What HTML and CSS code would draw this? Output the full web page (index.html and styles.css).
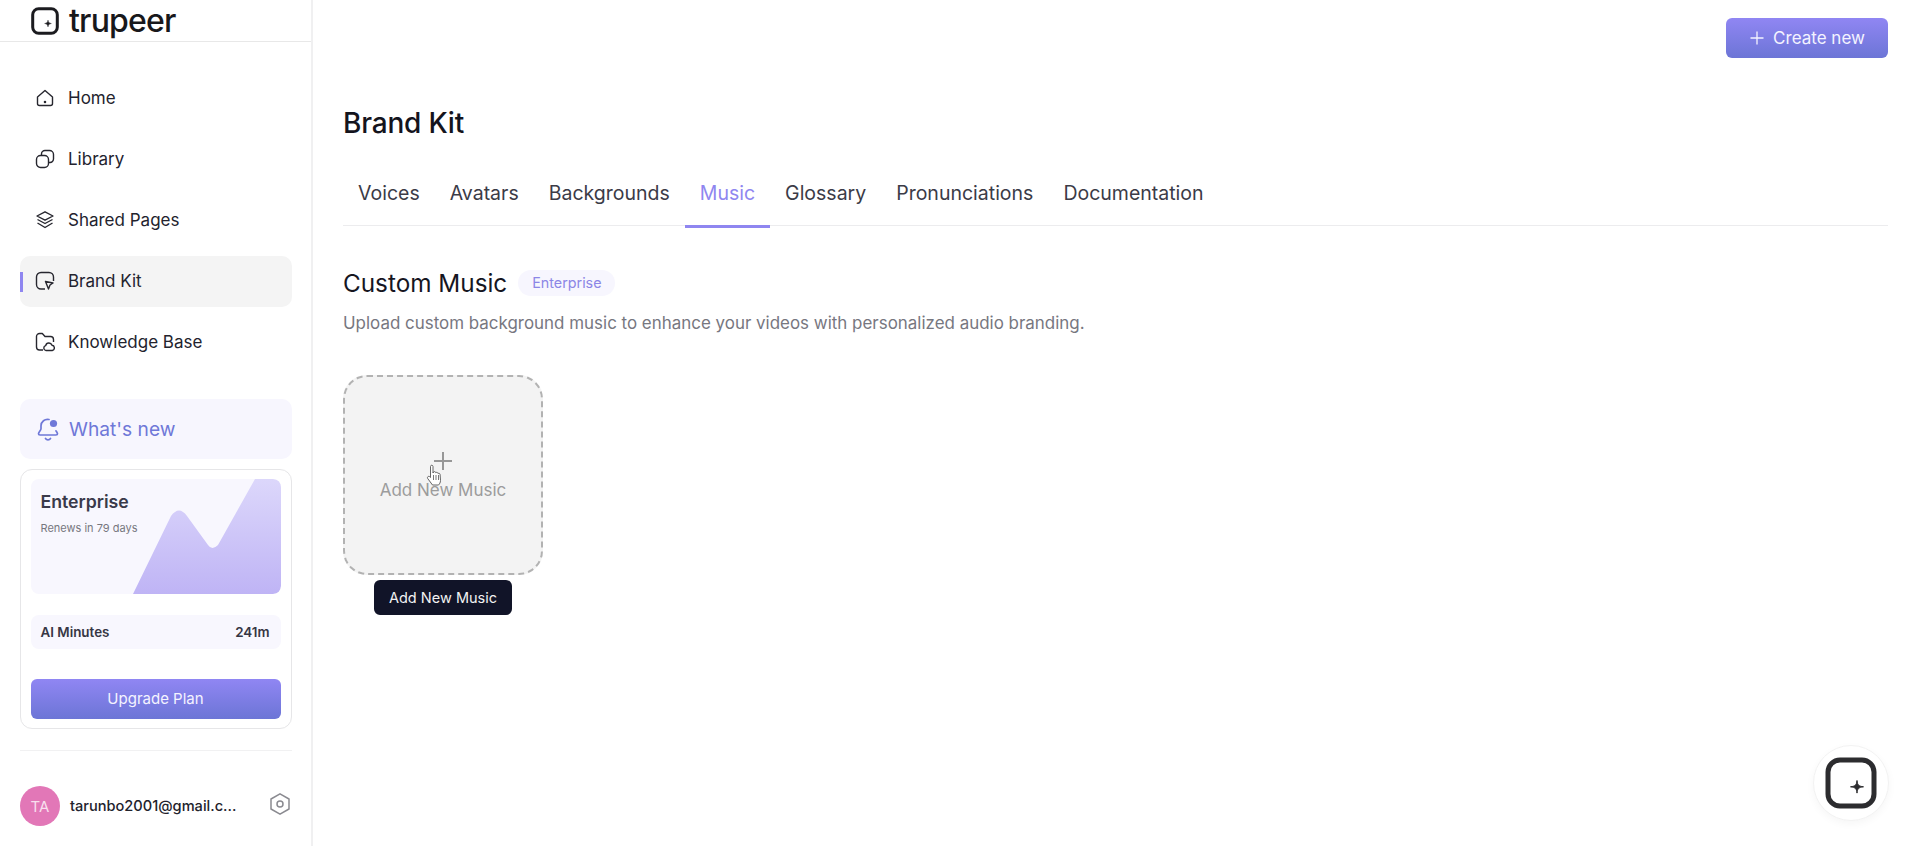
FILE: index.html
```html
<!DOCTYPE html>
<html lang="en">
<head>
<meta charset="utf-8">
<title>Brand Kit</title>
<link rel="stylesheet" href="styles.css">
</head>
<body>
<div class="app">
  <aside class="sidebar">
    <div class="logo">
      <svg class="logo-mark" viewBox="0 0 28 28" fill="none"><rect x="1.700" y="1.700" width="24.600" height="24.600" rx="6" stroke="#1b1b1f" stroke-width="3"/><path d="M17 13.200c.3 2.200 1.100 3 3.300 3.300-2.200.3-3 1.100-3.300 3.300-.3-2.200-1.100-3-3.300-3.300 2.200-.3 3-1.100 3.300-3.300z" fill="#1b1b1f" stroke="#1b1b1f" stroke-width=".5"/></svg>
      <span class="logo-text">trupeer</span>
    </div>
    <nav class="nav">
      <a class="nav-item"><svg class="nav-icon" viewBox="0 0 20 20" fill="none" stroke="#27272f" stroke-width="1.400"><path d="M2.500 9 10 2.500 17.500 9v6.500a2 2 0 0 1-2 2h-11a2 2 0 0 1-2-2z" stroke-linejoin="round"/><circle cx="10" cy="14" r=".6" fill="#27272f"/></svg><span>Home</span></a>
      <a class="nav-item"><svg class="nav-icon" viewBox="0 0 20 20" fill="none" stroke="#27272f" stroke-width="1.400"><rect x="1.500" y="6.500" width="12" height="12" rx="4"/><path d="M6.500 6.500V5a3.500 3.500 0 0 1 3.500-3.500h4.500A4 4 0 0 1 18.500 5.500V10a3.500 3.500 0 0 1-3.500 3.500h-1.500"/></svg><span>Library</span></a>
      <a class="nav-item"><svg class="nav-icon" viewBox="0 0 20 20" fill="none" stroke="#27272f" stroke-width="1.400" stroke-linejoin="round"><path d="M10 1.800 18 6l-8 4.200L2 6z"/><path d="M2.500 9.500 10 13.500l7.500-4"/><path d="M2.500 13 10 17.500l7.500-4.500"/></svg><span>Shared Pages</span></a>
      <a class="nav-item active"><svg class="nav-icon" viewBox="0 0 20 20" fill="none" stroke="#27272f" stroke-width="1.400" stroke-linejoin="round"><path d="M10 18H6a4.500 4.500 0 0 1-4.500-4.500V6A4.500 4.500 0 0 1 6 1.500h8A4.500 4.500 0 0 1 18.500 6v4"/><path d="M10.500 10.500 18 12l-3 2-1.500 4z"/></svg><span>Brand Kit</span></a>
      <a class="nav-item"><svg class="nav-icon" viewBox="0 0 20 20" fill="none" stroke="#27272f" stroke-width="1.400" stroke-linejoin="round"><path d="M8 18H4.500a3 3 0 0 1-3-3V4.500a3 3 0 0 1 3-3h2.800L10 4.500h5.500a3 3 0 0 1 3 3V10"/><path d="M11 18.500a2.500 2.500 0 0 1-.3-4.900 3.300 3.300 0 0 1 6.300-.4 2.700 2.700 0 0 1 .3 5.300z"/></svg><span>Knowledge Base</span></a>
    </nav>
    <a class="whats-new">
      <svg class="bell" viewBox="0 0 24 24" fill="none" stroke="#6f78d8" stroke-width="1.700" stroke-linecap="round"><path d="M13 2.500a6.500 6.500 0 0 0-8 6.300v3c0 1.500-2.500 3.500-2.500 5 0 .8.700 1.200 1.500 1.200h16c.8 0 1.500-.4 1.500-1.200 0-1-1-2-1.500-3"/><path d="M9.500 21.500a3 3 0 0 0 5 0"/><circle cx="17.500" cy="6.500" r="3.600" fill="#6f78d8" stroke="none"/></svg>
      <span>What's new</span>
    </a>
    <section class="plan-card">
      <div class="plan-top">
        <svg class="plan-chart" viewBox="0 0 250 115" preserveAspectRatio="none"><defs><linearGradient id="cg" x1="0" y1="0" x2="0" y2="1"><stop offset="0" stop-color="#dcd7fb"/><stop offset="1" stop-color="#bfb4f5"/></linearGradient></defs><path d="M102 115 L140 37 Q148 26 156 37 L177 66 Q181 72 187 66 L224 0 H242 Q250 0 250 8 V107 Q250 115 242 115 Z" fill="url(#cg)"/></svg>
        <h3 class="plan-name">Enterprise</h3>
        <p class="plan-renew">Renews in 79 days</p>
      </div>
      <div class="plan-row"><span>AI Minutes</span><span>241m</span></div>
      <button class="btn plan-btn">Upgrade Plan</button>
    </section>
    <div class="account">
      <span class="avatar">TA</span>
      <span class="email">tarunbo2001@gmail.c...</span>
      <svg class="gear" viewBox="0 0 24 24" fill="none" stroke="#8a8a90" stroke-width="1.500" stroke-linejoin="round"><path d="M12 1.800 21 7v10l-9 5.200L3 17V7z"/><circle cx="12" cy="12" r="3"/></svg>
    </div>
  </aside>
  <main class="main">
    <div class="topbar">
      <button class="btn create-btn"><svg class="plus" viewBox="0 0 16 16" fill="none" stroke="currentColor" stroke-width="1.300"><path d="M8 1.500v13M1.500 8h13"/></svg>Create new</button>
    </div>
    <h1 class="title">Brand Kit</h1>
    <div class="tabs">
      <a class="tab">Voices</a><a class="tab">Avatars</a><a class="tab">Backgrounds</a><a class="tab current">Music</a><a class="tab">Glossary</a><a class="tab">Pronunciations</a><a class="tab">Documentation</a>
    </div>
    <div class="section-head">
      <h2 class="section-title">Custom Music</h2>
      <span class="badge">Enterprise</span>
    </div>
    <p class="section-desc">Upload custom background music to enhance your videos with personalized audio branding.</p>
    <div class="drop-wrap">
      <div class="drop">
        <svg class="drop-plus" viewBox="0 0 18 18" fill="none" stroke="#979797" stroke-width="2"><path d="M9 0v18M0 9h18"/></svg>
        <span class="drop-label">Add New Music</span>
        <svg class="hand" viewBox="0 0 18 24"><path d="M4.500 2.500c0-1.700 2.500-1.700 2.500 0v6.500l.5-1c1-.8 2.200-.3 2.300.7.900-.7 2.100-.3 2.200.8.900-.5 2-.1 2.100 1l.4 6c0 2-1 3.500-2 4.500H6.500L1.700 14.500c-.9-1.300.7-2.900 2-1.800l.8.800z" fill="#fff" stroke="#555" stroke-width=".9" stroke-linejoin="round"/><path d="M7.500 11v5M10 11v5M12.500 11v5" stroke="#555" stroke-width=".8"/></svg>
      </div>
      <div class="tooltip">Add New Music</div>
    </div>
  </main>
</div>
<div class="fab"><svg viewBox="0 0 52 52" fill="none"><rect x="3" y="3" width="46" height="46" rx="12" stroke="#2c2c2f" stroke-width="5"/><path d="M32 23.500c.4 4.500 1.700 5.700 6.500 6.300-4.800.6-6.100 1.800-6.500 6.300-.4-4.500-1.700-5.700-6.500-6.300 4.800-.6 6.100-1.800 6.500-6.300z" fill="#2c2c2f" stroke="#2c2c2f"/></svg></div>
</body>
</html>
```
FILE: styles.css
```css
* { box-sizing: border-box; }
html, body { margin: 0; height: 100%; }
body { font-family: Inter, "Liberation Sans", sans-serif; background: #fff; color: #1b1b25; overflow: hidden; }
h1, h2, h3, p { margin: 0; }
button { font-family: inherit; border: 0; }

.app { display: flex; height: 846px; }

.sidebar { width: 313px; flex: none; border-right: 2px solid #f0f0f1; display: flex; flex-direction: column; padding: 0 19px 0 20px; }
.logo { height: 42px; margin: 0 -19px 0 -20px; padding: 1px 0 0 31px; border-bottom: 1px solid #e8e8e8; display: flex; align-items: center; gap: 10px; flex: none; }
.logo-mark { width: 28px; height: 28px; flex: none; margin-top: -1px; }
.logo-text { font-size: 32px; font-weight: 500; letter-spacing: -.8px; color: #18181b; line-height: 36px; }

.nav { display: flex; flex-direction: column; gap: 10px; margin-top: 31px; }
.nav-item { display: flex; align-items: center; gap: 13px; height: 51px; padding: 0 0 1px 15px; border-radius: 10px; font-size: 17px; color: #23232e; position: relative; }
.nav-icon { width: 20px; height: 20px; flex: none; }
.nav-item.active { background: #f4f4f4; }
.nav-item.active::before { content: ""; position: absolute; left: 0; top: 16px; width: 3px; height: 20px; background: #8f86f0; }

.whats-new { height: 60px; margin-top: 31px; border-radius: 10px; background: #f7f6fe; display: flex; align-items: center; gap: 9px; padding-left: 16px; font-size: 19.200px; color: #6f78d8; flex: none; }
.bell { width: 24px; height: 24px; flex: none; }

.plan-card { margin-top: 10px; height: 260px; border: 1.500px solid #e6e6e8; border-radius: 12px; padding: 8.500px 10.500px 9px 9.500px; display: flex; flex-direction: column; flex: none; }
.plan-top { height: 115px; background: #f8f7fe; border-radius: 8px; padding: 11.500px 10px; position: relative; overflow: hidden; flex: none; }
.plan-chart { position: absolute; inset: 0; width: 100%; height: 100%; }
.plan-name { position: relative; font-size: 17.700px; line-height: 24px; font-weight: 600; color: #3a3a4a; }
.plan-renew { position: relative; font-size: 11px; line-height: 14px; margin-top: 7px; color: #77777f; }
.plan-row { margin-top: 21px; height: 34px; border-radius: 8px; background: #f8f7fe; display: flex; justify-content: space-between; align-items: center; padding: 0 11px 0 10px; font-size: 13.400px; font-weight: 600; color: #363644; flex: none; }
.btn { background: linear-gradient(#9086f3, #6c75d6); color: #f4f3ff; border-radius: 6px; }
.plan-btn { margin-top: 30px; height: 40px; font-size: 15px; flex: none; }

.account { margin-top: 21px; padding-top: 35px; border-top: 1px solid #f1f1f2; display: flex; align-items: center; flex: none; }
.avatar { width: 40px; height: 40px; border-radius: 50%; background: #e277b7; color: #f8dfee; font-size: 15px; display: flex; align-items: center; justify-content: center; flex: none; }
.email { margin-left: 10px; width: 198px; font-size: 14.600px; font-weight: 500; color: #22222c; white-space: nowrap; }
.gear { width: 24px; height: 24px; flex: none; margin-top: -4px; }

.main { flex: 1; padding: 18px 32px 0 30px; min-width: 0; position: relative; }
.topbar { display: flex; justify-content: flex-end; }
.create-btn { width: 162px; height: 40px; display: flex; align-items: center; justify-content: center; gap: 8px; font-size: 17px; }
.plus { width: 16px; height: 16px; flex: none; }
.title { font-size: 28px; line-height: 36px; font-weight: 500; color: #14141d; margin-top: 47px; letter-spacing: -.2px; }
.tabs { display: flex; margin-top: 35px; border-bottom: 1px solid #ececee; height: 50px; }
.tab { padding: 0 15px; font-size: 19.500px; line-height: 35px; height: 52px; color: #3b3b47; flex: none; }
.tab.current { color: #8f86f0; border-bottom: 3px solid #8f86f0; }
.section-head { display: flex; align-items: center; gap: 11px; margin-top: 42px; }
.section-title { font-size: 24.300px; line-height: 30px; font-weight: 400; color: #16161f; }
.badge { background: #f7f6fe; color: #8c86e6; font-size: 14.300px; line-height: 26px; padding: 0 14px; border-radius: 13px; }
.section-desc { margin-top: 13px; font-size: 16.950px; line-height: 24px; color: #77777f; }

.drop-wrap { display: flex; flex-direction: column; align-items: center; width: 200px; margin-top: 40px; }
.drop { width: 200px; height: 200px; border: 2px dashed #b2b2b2; border-radius: 24px; background: #f3f3f3; display: flex; flex-direction: column; align-items: center; justify-content: center; gap: 8px; padding-top: 4px; position: relative; }
.drop-plus { width: 18px; height: 18px; }
.drop-label { font-size: 17px; line-height: 24px; color: #9c9c9c; }
.hand { position: absolute; left: 81px; top: 87px; width: 18px; height: 24px; }
.tooltip { margin-top: 5px; width: 138px; height: 35px; border-radius: 6px; background: #111428; color: #f2f2f2; font-size: 14.500px; display: flex; align-items: center; justify-content: center; }

.fab { position: fixed; left: 1813px; top: 745px; width: 76px; height: 76px; border-radius: 50%; background: #fff; border: 1px solid #f2f2f2; box-shadow: 0 3px 8px rgba(0,0,0,.04); display: flex; align-items: center; justify-content: center; }
.fab svg { width: 52px; height: 52px; }
```
